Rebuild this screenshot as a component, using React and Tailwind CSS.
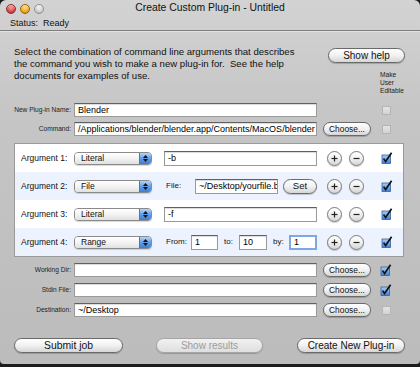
const metal =
  'bg-[linear-gradient(180deg,#d3d3d3_0%,#c6c6c6_30%,#c1c1c1_60%,#bcbcbc_100%)]';

const AquaButton = ({ children, className = '', disabled = false }) => (
  <div
    className={`flex items-center justify-center whitespace-nowrap rounded-full border bg-linear-to-b shadow-[0_1px_1px_rgba(0,0,0,0.2)] ${
      disabled
        ? 'border-[#a5a5a5] from-[#f2f2f2] to-[#dedede] text-[#9c9c9c]'
        : 'border-[#6a6a6a] from-white via-[#f1f1f1] to-[#d6d6d6] text-[#111]'
    } ${className}`}
  >
    {children}
  </div>
);

const Field = ({ value = '', className = '', focused = false }) => (
  <div
    className={`flex items-center overflow-hidden whitespace-nowrap bg-white pl-[3px] text-[9px] leading-none text-black ${
      focused
        ? 'border-2 border-[#7ea8e2] pl-[2px]'
        : 'border border-[#9a9a9a] border-t-[#606060] shadow-[inset_0_1px_1px_rgba(0,0,0,0.15)]'
    } ${className}`}
  >
    {value}
  </div>
);

const Popup = ({ value }) => (
  <div className="flex h-[13px] w-[78px] overflow-hidden rounded-[4px] border border-[#8a8a8a] shadow-[0_1px_1px_rgba(0,0,0,0.15)]">
    <div className="flex flex-1 items-center bg-linear-to-b from-white via-[#f3f3f3] to-[#e0e0e0] pl-[6px] text-[8.5px] leading-none">
      {value}
    </div>
    <div className="flex w-[12px] flex-col items-center justify-center gap-[1px] border-l border-[#4f76b0] bg-linear-to-b from-[#b4d4f7] via-[#619de6] to-[#3c7ed6]">
      <svg width="5" height="3" viewBox="0 0 5 3">
        <path d="M0 3 L2.5 0 L5 3Z" fill="#111" />
      </svg>
      <svg width="5" height="3" viewBox="0 0 5 3">
        <path d="M0 0 L2.5 3 L5 0Z" fill="#111" />
      </svg>
    </div>
  </div>
);

const RoundButton = ({ minus = false, className = '' }) => (
  <div
    className={`flex h-[15px] w-[15px] items-center justify-center rounded-full border border-[#7a7a7a] bg-linear-to-b from-white via-[#f0f0f0] to-[#d4d4d4] shadow-[0_1px_1px_rgba(0,0,0,0.2)] ${className}`}
  >
    <svg width="7" height="7" viewBox="0 0 7 7">
      <path d="M0.5 3.5 H6.5" stroke="#222" strokeWidth="1.2" />
      {!minus && <path d="M3.5 0.5 V6.5" stroke="#222" strokeWidth="1.2" />}
    </svg>
  </div>
);

const CheckOn = () => (
  <svg width="12" height="12" viewBox="0 0 12 12">
    <defs>
      <linearGradient id="cb" x1="0" y1="0" x2="0" y2="1">
        <stop offset="0" stopColor="#a9d0f8" />
        <stop offset="1" stopColor="#3a7fd8" />
      </linearGradient>
    </defs>
    <rect x="1" y="3" width="8.5" height="8.5" fill="url(#cb)" stroke="#3b5f96" strokeWidth="0.8" />
    <path d="M2.6 6.6 L4.6 9.6 L10.6 0.8" fill="none" stroke="#111" strokeWidth="1.7" />
  </svg>
);

const CheckOff = () => (
  <div className="h-[9px] w-[9px] border border-[#b4b4b4] bg-linear-to-b from-[#e4e4e4] to-[#d2d2d2]" />
);

const Light = ({ className }) => (
  <div className={`h-[10px] w-[10px] rounded-full border shadow-[inset_0_1px_1px_rgba(255,255,255,0.6)] ${className}`} />
);

const FormRow = ({ label, value, button = true, checked = false }) => (
  <div className="flex h-[14px] items-center">
    <div className="w-[57px] whitespace-nowrap text-right text-[6.6px] leading-none text-[#222]">{label}</div>
    <Field value={value} className="ml-[3px] h-[14px] w-[243px]" />
    {button ? (
      <AquaButton className="ml-[6px] h-[14px] w-[48px] text-[8.4px]">Choose...</AquaButton>
    ) : (
      <div className="ml-[6px] w-[48px]" />
    )}
    <div className="ml-[9px] flex w-[12px] justify-center">{checked ? <CheckOn /> : <CheckOff />}</div>
  </div>
);

const ArgRow = ({ n, type, blue, children }) => (
  <div className={`flex h-[28px] items-center pl-[6px] ${blue ? 'bg-[#edf3fe]' : 'bg-white'}`}>
    <div className="w-[53px] whitespace-nowrap text-[8.5px] leading-none">Argument {n}:</div>
    <Popup value={type} />
    <div className="ml-[12px] flex w-[153px] items-center">{children}</div>
    <RoundButton className="ml-[10px]" />
    <RoundButton minus className="ml-[7px]" />
    <div className="ml-[17px]">
      <CheckOn />
    </div>
  </div>
);

export default function App() {
  return (
    <div className="h-[367px] w-[420px] overflow-hidden bg-[#1c1c1c] font-['Liberation_Sans',Arial,sans-serif] text-[#111]">
      <div className={`flex h-[364px] w-[420px] flex-col rounded-t-[6px] rounded-b-[4px] ${metal}`}>
        <div className="grid h-[17px] grid-cols-[1fr_auto_1fr] items-center">
          <div className="flex items-center gap-[4px] pl-[6px]">
            <Light className="border-[#8d2a2a] bg-[radial-gradient(circle_at_50%_35%,#f7a0a0,#d9464b_60%,#a52528)]" />
            <Light className="border-[#9a6300] bg-[radial-gradient(circle_at_50%_35%,#ffe08a,#f2a51c_60%,#c97a00)]" />
            <Light className="border-[#8f8f8f] bg-[radial-gradient(circle_at_50%_35%,#f4f4f4,#cfcfcf_60%,#a9a9a9)]" />
          </div>
          <div className="whitespace-nowrap text-[10.4px] leading-none">Create Custom Plug-in - Untitled</div>
          <div />
        </div>
        <div className="flex h-[13px] items-center pl-[10px] text-[9px] leading-none">
          <span>Status:</span>
          <span className="ml-[5px]">Ready</span>
        </div>
        <div className="h-px bg-[#7e7e7e]" />
        <div className="h-px bg-[#e2e2e2]" />

        <div className="flex flex-col pl-[14px] pr-[15px]">
          <div className="mt-[14px] flex">
            <p className="w-[312px] whitespace-nowrap text-[9.6px] leading-[12px] text-[#111]">
              Select the combination of command line arguments that describes
              <br />
              the command you wish to make a new plug-in for.&nbsp; See the help
              <br />
              documents for examples of use.
            </p>
            <div className="ml-auto flex flex-col items-end">
              <AquaButton className="mt-[2px] h-[15px] w-[77px] text-[10px]">Show help</AquaButton>
              <div className="mt-[8px] w-[25px] text-[6.6px] leading-[8px] text-[#222]">
                Make
                <br />
                User
                <br />
                Editable
              </div>
            </div>
          </div>

          <div className="mt-[8px] flex flex-col gap-[5px]">
            <FormRow label="New Plug-in Name:" value="Blender" button={false} />
            <FormRow label="Command:" value="/Applications/blender/blender.app/Contents/MacOS/blender" />
          </div>

          <div className="mt-[7px] flex w-[390px] flex-col border border-[#9a9a9a]">
            <ArgRow n={1} type="Literal">
              <Field value="-b" className="h-[15px] w-[153px]" />
            </ArgRow>
            <ArgRow n={2} type="File" blue>
              <div className="w-[31px] pl-[2px] text-[8px] leading-none">File:</div>
              <Field value="~/Desktop/yourfile.b" className="h-[15px] w-[83px]" />
              <AquaButton className="ml-[5px] h-[15px] w-[34px] text-[9.5px]">Set</AquaButton>
            </ArgRow>
            <ArgRow n={3} type="Literal">
              <Field value="-f" className="h-[15px] w-[153px]" />
            </ArgRow>
            <ArgRow n={4} type="Range" blue>
              <div className="w-[27px] pl-[2px] text-[8px] leading-none">From:</div>
              <Field value="1" className="h-[15px] w-[27px]" />
              <div className="ml-[6px] w-[15px] text-[8px] leading-none">to:</div>
              <Field value="10" className="h-[15px] w-[28px]" />
              <div className="ml-[6px] w-[16px] text-[8px] leading-none">by:</div>
              <Field value="1" focused className="h-[15px] w-[28px]" />
            </ArgRow>
          </div>

          <div className="mt-[6px] flex flex-col gap-[6px]">
            <FormRow label="Working Dir:" value="" checked />
            <FormRow label="Stdin File:" value="" checked />
            <FormRow label="Destination:" value="~/Desktop" />
          </div>

          <div className="mt-[21px] flex">
            <AquaButton className="h-[15px] w-[109px] text-[10.4px]">Submit job</AquaButton>
            <AquaButton disabled className="ml-[33px] h-[15px] w-[107px] text-[10px]">
              Show results
            </AquaButton>
            <AquaButton className="ml-[34px] h-[15px] w-[108px] text-[10px]">Create New Plug-in</AquaButton>
          </div>
        </div>
      </div>
    </div>
  );
}
